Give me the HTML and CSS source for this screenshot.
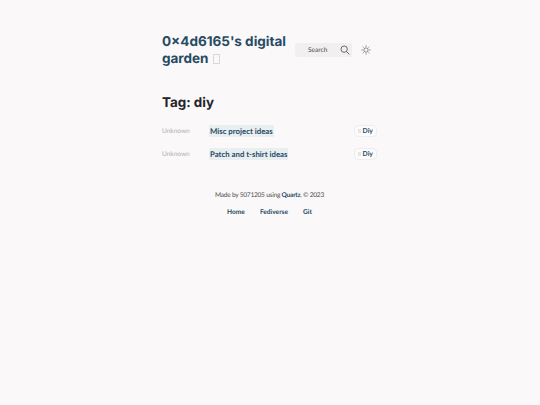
FILE: index.html
```html
<!DOCTYPE html>
<html lang="en">
<head>
<meta charset="utf-8">
<title>Tag: diy</title>
<link rel="stylesheet" href="styles.css">
</head>
<body>
<div class="page">
  <header class="top">
    <h1 class="site-title">0×4d6165's digital garden <span class="tofu"></span></h1>
    <div class="search">
      <span class="search-label">Search</span>
      <svg class="search-icon" viewBox="0 0 12 12" width="10" height="10" fill="none" stroke="#4e4e4e" stroke-width="1"><circle cx="5" cy="5" r="3.8"/><path d="M7.8 7.8 11.3 11.3"/></svg>
    </div>
    <svg class="theme" viewBox="0 0 12 12" width="10" height="10" fill="none" stroke="#4e4e4e" stroke-width=".8"><circle cx="6" cy="6" r="2.6"/><path d="M6 .4v1.6M6 10v1.6M.4 6H2M10 6h1.6M2 2l1.1 1.1M8.9 8.9 10 10M2 10l1.1-1.1M8.9 3.1 10 2"/></svg>
  </header>
  <h2 class="tag-title">Tag: diy</h2>
  <ul class="notes">
    <li class="note">
      <span class="date">Unknown</span>
      <span class="note-title"><a class="note-link">Misc project ideas</a></span>
      <span class="tag"><span class="tag-mark"></span>Diy</span>
    </li>
    <li class="note">
      <span class="date">Unknown</span>
      <span class="note-title"><a class="note-link">Patch and t-shirt ideas</a></span>
      <span class="tag"><span class="tag-mark"></span>Diy</span>
    </li>
  </ul>
  <footer class="footer">
    <p class="credit">Made by 5071205 using <b class="credit-link">Quartz</b>, © 2023</p>
    <nav class="links"><a>Home</a><a>Fediverse</a><a>Git</a></nav>
  </footer>
</div>
</body>
</html>
```
FILE: styles.css
```css
* { box-sizing: border-box; }
html, body { margin: 0; padding: 0; }
body {
  min-height: 405px;
  background: #faf8f8;
  font-family: Lato, "Noto Sans", sans-serif;
  color: #2b2b2b;
  text-rendering: geometricPrecision;
}
.page { width: 215px; margin-left: 162px; padding-top: 34px; }
.top { display: flex; align-items: flex-start; }
.site-title {
  margin: 0;
  width: 133px;
  flex: none;
  font: 700 13.5px/16.5px Inter, sans-serif;
  color: #284b63;
}
.tofu {
  display: inline-block;
  width: 7px;
  height: 10px;
  border: 1px solid #d5d9db;
  vertical-align: -1px;
  margin-left: 1px;
}
.search {
  flex: none;
  width: 57px;
  height: 14px;
  margin-top: 9px;
  background: #f0f0f1;
  border-radius: 2px;
  display: flex;
  align-items: center;
  font-size: 6.6px;
  color: #4e4e4e;
  padding-left: 13px;
}
.search-label { flex: 1; }
.search-icon { margin-right: 2px; }
.theme { flex: none; margin: 11px 0 0 9px; }
.tag-title {
  margin: 27px 0 0;
  font: 700 13.4px/18px Inter, sans-serif;
  color: #232328;
}
.notes { list-style: none; margin: 8px 0 0; padding: 0; }
.note {
  display: flex;
  align-items: center;
  height: 22.5px;
  line-height: 10px;
  font-size: 7.8px;
}
.date { width: 47px; flex: none; color: #b0b0b0; font-size: 6.6px; letter-spacing: -.05px; }
.note-title { flex: 1; }
.note-link {
  background: #e9eef1;
  border-radius: 1px;
  padding: 1px;
  font-weight: 700;
  color: #284b63;
}
.tag {
  flex: none;
  width: 23px;
  height: 12px;
  border: 1px solid #efeded;
  border-radius: 4px;
  background: #fcfbfb;
  display: flex;
  align-items: center;
  justify-content: center;
  gap: 2px;
  font-size: 6.8px;
  font-weight: 700;
  color: #284b63;
}
.tag-mark { width: 2.5px; height: 4px; background: #e4e6e7; }
.footer { margin-top: 25px; text-align: center; font-size: 6.6px; letter-spacing: -.25px; color: #4e4e4e; }
.credit { margin: 0; line-height: 10px; }
.credit-link { font-weight: 700; color: #284b63; }
.links { display: flex; justify-content: center; gap: 15px; margin-top: 6.5px; line-height: 10px; font-size: 6.6px; letter-spacing: 0; font-weight: 700; color: #284b63; }
```
